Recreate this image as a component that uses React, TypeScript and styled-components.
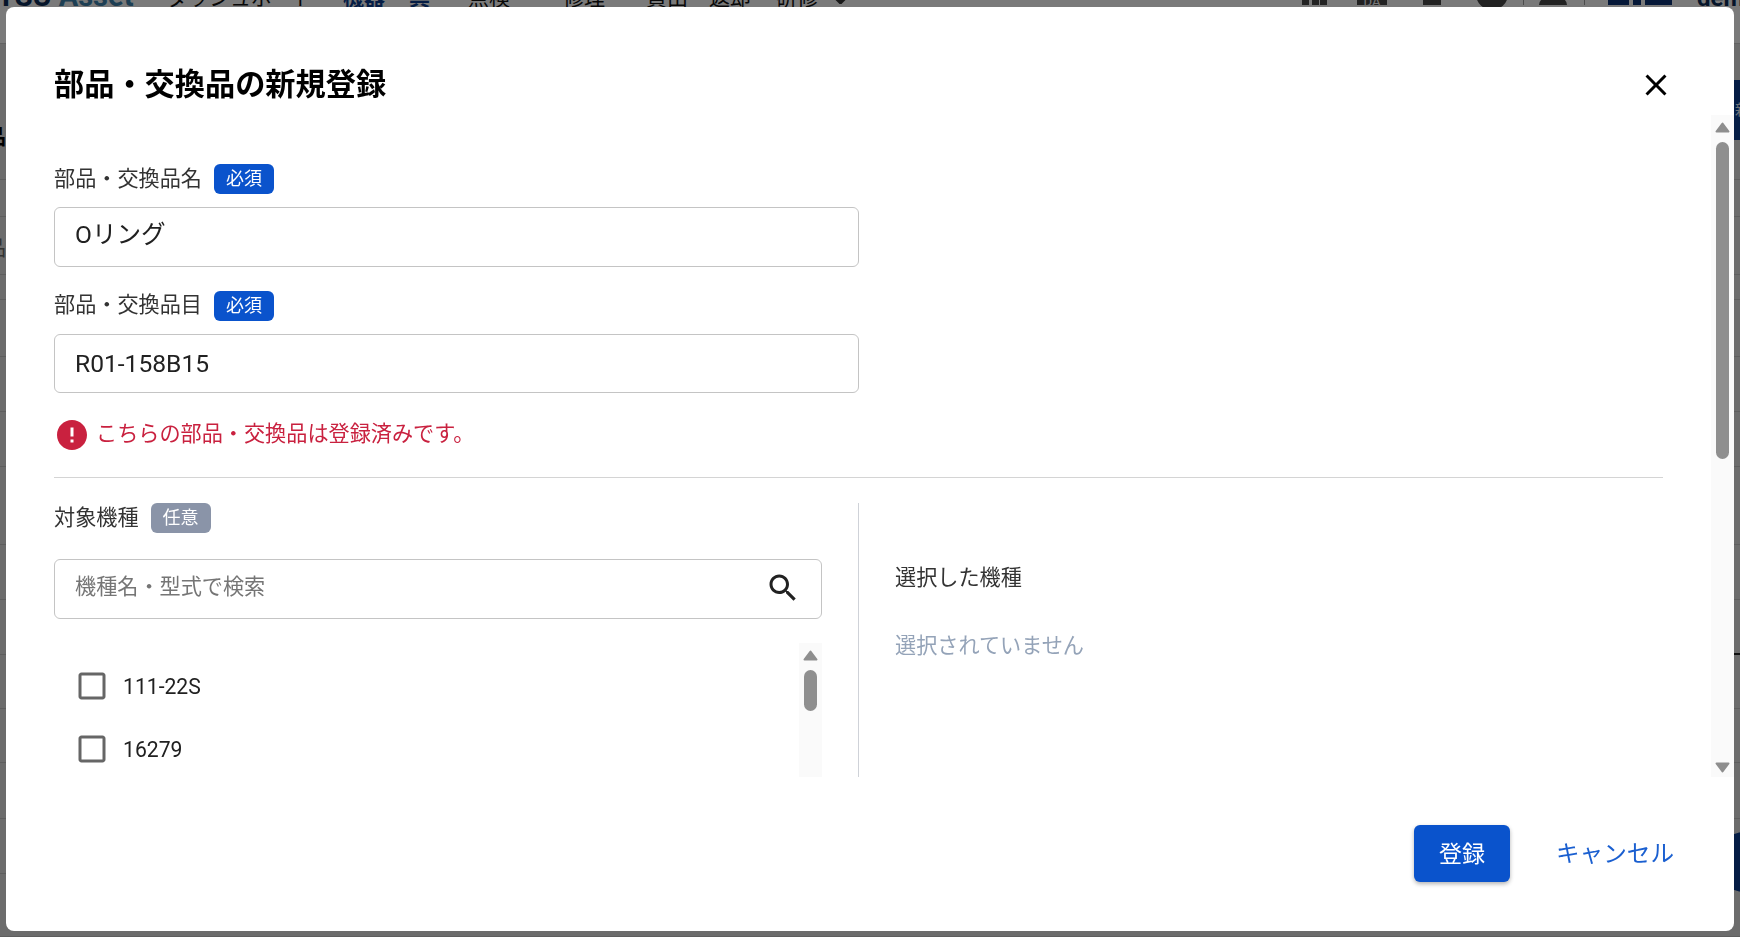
import React from 'react';
import styled, { createGlobalStyle } from 'styled-components';

const GlobalStyle = createGlobalStyle`
  html, body {
    margin: 0;
    height: 100%;
    overflow: hidden;
    background: #d8d8d8;
    font-family: Roboto, "Noto Sans CJK JP", sans-serif;
  }

  * {
    box-sizing: border-box;
  }
`;

/* page behind the dialog, only its edges stay visible */

const Page = styled.div`
  height: 100vh;
  display: flex;
  flex-direction: column;
  overflow: hidden;
`;

const TopBar = styled.header`
  height: 44px;
  flex-shrink: 0;
  background: #f4f4f4;
  border-bottom: 1px solid #c4c4c4;
`;

const TopRow = styled.div`
  height: 5px;
  display: flex;
  align-items: flex-end;
  white-space: nowrap;
  color: #111;
  font-size: 21px;
  line-height: 1;
`;

const Logo = styled.span`
  flex-shrink: 0;
  width: 170px;
  margin-left: -3px;
  font-size: 29px;
  font-weight: 700;
  color: #0a2a55;
  transform: translateY(6px);

  span {
    margin-left: 7px;
    color: #3b7ea8;
  }
`;

const NavItem = styled.span<{ $gap: number; $active?: boolean }>`
  flex-shrink: 0;
  margin-left: ${props => props.$gap}px;
  font-weight: ${props => (props.$active ? 700 : 400)};
  color: ${props => (props.$active ? '#0a3a8a' : '#111')};
  transform: translateY(4px);
`;

const NavChevron = styled.svg`
  flex-shrink: 0;
  width: 17px;
  height: 17px;
  margin-left: 14px;
  color: #333;
  transform: translateY(-1px);
`;

const RightGroup = styled.div`
  margin-left: auto;
  display: flex;
  align-items: flex-end;
  height: 7px;
  flex-shrink: 0;
  width: 438px;
  position: relative;
`;

const BarBlock = styled.span<{ $gap: number; $width: number; $color?: string }>`
  flex-shrink: 0;
  height: 7px;
  margin-left: ${props => props.$gap}px;
  width: ${props => props.$width}px;
  background: ${props => props.$color || '#444'};
`;

const HelpCircle = styled.span`
  flex-shrink: 0;
  width: 32px;
  height: 32px;
  margin: 0 -1px 0 35px;
  border-radius: 50%;
  background: #444;
  transform: translateY(5px);
`;

const UserShoulders = styled.span`
  flex-shrink: 0;
  width: 28px;
  height: 7px;
  margin-left: 15px;
  border-radius: 12px 12px 0 0;
  background: #444;
`;

const Tag = styled.span`
  flex-shrink: 0;
  margin-left: 30px;
  width: 30px;
  height: 7px;
  background: #444;
  color: #eee;
  font-size: 13px;
  line-height: 7px;
  text-align: center;
`;

const UserName = styled.span`
  flex-shrink: 0;
  margin-left: 25px;
  font-weight: 700;
  font-size: 24px;
  color: #0a2a55;
  transform: translateY(5px);
`;

const Heading = styled.div`
  height: 136px;
  flex-shrink: 0;
  display: flex;
  border-bottom: 1px solid #bdbdbd;
`;

const HeadingText = styled.h1`
  margin: 83px 0 0 -36px;
  font-size: 21px;
  line-height: 21px;
  font-weight: 700;
  color: #000;
`;

const ActionButton = styled.div`
  margin: 36px -94px 0 auto;
  width: 100px;
  height: 60px;
  padding-left: 1px;
  background: #0a3a8a;
  color: #dfe6f2;
  font-size: 15px;
  line-height: 60px;
`;

const TableRow = styled.div<{ $height: number }>`
  height: ${props => props.$height}px;
  flex-shrink: 0;
  display: flex;
  align-items: center;
  border-bottom: 1px solid #bdbdbd;
  color: #666;
  font-size: 21px;
`;

const RowText = styled.span`
  margin-left: -15px;
`;

const RowMark = styled.span`
  margin: 54px 0 0 auto;
  width: 6px;
  height: 2px;
  background: #222;
`;

const RoundAction = styled.div`
  position: absolute;
  top: 832px;
  left: 1715px;
  width: 80px;
  height: 60px;
  border-radius: 30px;
  background: #0a3a8a;
`;

/* dialog */

const Backdrop = styled.div`
  position: fixed;
  inset: 0;
  display: flex;
  padding: 7px 6px 6px;
  background: rgba(0, 0, 0, 0.5);
`;

const Dialog = styled.div`
  flex: 1;
  min-width: 0;
  display: flex;
  flex-direction: column;
  background: white;
  border-radius: 8px;
  overflow: hidden;
  color: #212121;
  font-size: 21.15px;
`;

const DialogHeader = styled.div`
  height: 108px;
  flex-shrink: 0;
  display: flex;
  align-items: flex-start;
  justify-content: space-between;
  padding: 56px 60px 0 48px;
`;

const Title = styled.h2`
  margin: 0;
  font-size: 30.2px;
  line-height: 44px;
  font-weight: 700;
  color: #000;
`;

const CloseButton = styled.button`
  width: 36px;
  height: 36px;
  margin-top: 4px;
  padding: 0;
  border: none;
  background: none;
  color: #000;
  display: flex;
`;

const ScrollArea = styled.div`
  height: 662px;
  flex-shrink: 0;
  display: flex;
`;

const ScrollContent = styled.div`
  flex: 1;
  min-width: 0;
  overflow: hidden;
  padding: 49px 48px 0 48px;
`;

const Track = styled.div`
  width: 23px;
  flex-shrink: 0;
  display: flex;
  flex-direction: column;
  align-items: center;
  padding: 7px 0 4px;
  background: #fafafa;
  color: #8e8e8e;
`;

const Arrow = styled.svg<{ $down?: boolean }>`
  width: 15px;
  height: 11px;
  flex-shrink: 0;
  transform: ${props => (props.$down ? 'rotate(180deg)' : 'none')};
`;

const Thumb = styled.div<{ $height: number }>`
  width: 13px;
  height: ${props => props.$height}px;
  margin: 9px 0 auto;
  border-radius: 7px;
  background: #8f8f8f;
`;

const LabelRow = styled.div`
  height: 30px;
  display: flex;
  align-items: center;
  gap: 12px;
  margin-bottom: 13px;
  color: #333;
  line-height: 30px;
`;

const LabelText = styled.span`
  margin-top: -1px;
`;

const Badge = styled.span<{ $optional?: boolean }>`
  width: 60px;
  height: 30px;
  border-radius: 6px;
  background: ${props => (props.$optional ? '#8a94a8' : '#0a53cc')};
  color: white;
  font-size: 18px;
  line-height: 29px;
  text-align: center;
`;

const TextInput = styled.input<{ $raised?: boolean }>`
  display: block;
  width: 805px;
  height: 59.5px;
  margin-bottom: 24px;
  padding: 0 20px ${props => (props.$raised ? '9px' : '0')};
  border: 1px solid #c4c4c4;
  border-radius: 6px;
  outline: none;
  background: white;
  color: #212121;
  font-family: inherit;
  font-size: 24.6px;
`;

const ErrorRow = styled.div`
  height: 36px;
  display: flex;
  align-items: center;
  gap: 6px;
  color: #c9213f;
  line-height: 36px;
`;

const ErrorText = styled.span`
  margin-top: -3px;
`;

const Divider = styled.hr`
  width: 1609px;
  margin: 24px 0 25px;
  border: none;
  border-top: 1px solid #d4d4d4;
`;

const Columns = styled.div`
  display: grid;
  grid-template-columns: 805px 1fr;
  height: 400px;
`;

const PickerColumn = styled.div`
  padding-right: 36px;
  border-right: 1px solid #cfd2d8;
`;

const SearchBox = styled.div`
  height: 59.5px;
  margin-top: 26px;
  display: flex;
  align-items: center;
  justify-content: space-between;
  padding: 0 20px 2px 20px;
  border: 1px solid #c4c4c4;
  border-radius: 6px;
  color: #212121;
`;

const SearchInput = styled.input`
  flex: 1;
  min-width: 0;
  border: none;
  outline: none;
  padding: 0 0 2px;
  background: none;
  color: #212121;
  font-family: inherit;
  font-size: 21.15px;

  &::placeholder {
    color: #757575;
    opacity: 1;
  }
`;

const ListArea = styled.div`
  display: flex;
  height: 300px;
  margin-top: 24px;
`;

const CheckList = styled.ul`
  flex: 1;
  margin: 0;
  padding: 12px 0 0 20px;
  list-style: none;
`;

const CheckRow = styled.li`
  height: 63px;
  display: flex;
  align-items: center;
  gap: 13px;
  color: #212121;
  svg {
    color: #666;
  }
`;

const SelectedColumn = styled.div`
  padding: 60px 0 0 36px;
`;

const SelectedTitle = styled.div`
  line-height: 30px;
  color: #333;
`;

const EmptyText = styled.div`
  margin-top: 38px;
  line-height: 30px;
  color: #94a3b8;
`;

const DialogFooter = styled.div`
  flex: 1;
  display: flex;
  align-items: flex-start;
  justify-content: flex-end;
  gap: 46px;
  padding: 48px 60px 0 0;
`;

const SubmitButton = styled.button`
  width: 96px;
  height: 57px;
  padding: 0 0 4px;
  border: none;
  border-radius: 6px;
  background: #0a53cc;
  color: white;
  font-family: inherit;
  font-size: 23px;
  box-shadow: 0 2px 4px rgba(0, 0, 0, 0.3);
`;

const CancelButton = styled.button`
  height: 57px;
  padding: 0 0 4px;
  border: none;
  background: none;
  color: #1a5fd0;
  font-family: inherit;
  font-size: 23.6px;
`;

const MuiIcon: React.FC<{ d: string }> = ({ d }) => (
  <svg width="36" height="36" viewBox="0 0 24 24" fill="currentColor" style={{ flexShrink: 0 }}>
    <path d={d} />
  </svg>
);

const CLOSE = 'M19 6.41 17.59 5 12 10.59 6.41 5 5 6.41 10.59 12 5 17.59 6.41 19 12 13.41 17.59 19 19 17.59 13.41 12z';
const SEARCH = 'M15.5 14h-.79l-.28-.27C15.41 12.59 16 11.11 16 9.5 16 5.91 13.09 3 9.5 3S3 5.91 3 9.5 5.91 16 9.5 16c1.61 0 3.09-.59 4.23-1.57l.27.28v.79l5 4.99L20.49 19l-4.99-5zm-6 0C7.01 14 5 11.99 5 9.5S7.01 5 9.5 5 14 7.01 14 9.5 11.99 14 9.5 14z';
const ERROR = 'M12 2C6.48 2 2 6.48 2 12s4.48 10 10 10 10-4.48 10-10S17.52 2 12 2zm1 15h-2v-2h2v2zm0-4h-2V7h2v6z';
const CHECKBOX = 'M19 5v14H5V5h14m0-2H5c-1.1 0-2 .9-2 2v14c0 1.1.9 2 2 2h14c1.1 0 2-.9 2-2V5c0-1.1-.9-2-2-2z';

const ScrollArrow: React.FC<{ down?: boolean }> = ({ down }) => (
  <Arrow $down={down} viewBox="0 0 15 11">
    <polygon
      points="7.5,1.5 13.5,9.5 1.5,9.5"
      fill="currentColor"
      stroke="currentColor"
      strokeWidth="2"
      strokeLinejoin="round"
    />
  </Arrow>
);

const Scrollbar: React.FC<{ thumb: number }> = ({ thumb }) => (
  <Track>
    <ScrollArrow />
    <Thumb $height={thumb} />
    <ScrollArrow down />
  </Track>
);

const rowHeights = [37, 58, 25, 57, 55, 55, 78, 55, 55, 54, 54, 56, 55, 63];
const models = ['111-22S', '16279'];

export default function App() {
  return (
    <>
      <GlobalStyle />
      <Page>
        <TopBar>
          <TopRow>
            <Logo>
              TSU<span>Asset</span>
            </Logo>
            <NavItem $gap={0}>ダッシュボード</NavItem>
            <NavItem $gap={29} $active>機器</NavItem>
            <NavItem $gap={24} $active>具</NavItem>
            <NavItem $gap={38}>点検</NavItem>
            <NavItem $gap={53}>修理</NavItem>
            <NavItem $gap={41}>貸出・返却</NavItem>
            <NavItem $gap={25}>研修</NavItem>
            <NavChevron viewBox="0 0 17 17" fill="none">
              <path d="M2 9l6.5 6.5L15 9" stroke="currentColor" strokeWidth="3.5" />
            </NavChevron>
            <RightGroup>
              <BarBlock $gap={0} $width={7} />
              <BarBlock $gap={3} $width={7} />
              <BarBlock $gap={1} $width={7} />
              <Tag>DA</Tag>
              <BarBlock $gap={36} $width={18} />
              <HelpCircle />
              <BarBlock $gap={16} $width={1} $color="#999" />
              <UserShoulders />
              <BarBlock $gap={17} $width={1} $color="#999" />
              <BarBlock $gap={23} $width={21} $color="#0a3070" />
              <BarBlock $gap={4} $width={8} $color="#0a3070" />
              <BarBlock $gap={4} $width={27} $color="#0a3070" />
              <UserName>dem</UserName>
            </RightGroup>
          </TopRow>
        </TopBar>
        <Heading>
          <HeadingText>部品</HeadingText>
          <ActionButton>新規</ActionButton>
        </Heading>
        {rowHeights.map((height, index) => (
          <TableRow key={index} $height={height}>
            {index === 1 && <RowText>品</RowText>}
            {index === 8 && <RowMark />}
          </TableRow>
        ))}
      </Page>
      <RoundAction />
      <Backdrop>
        <Dialog>
          <DialogHeader>
            <Title>部品・交換品の新規登録</Title>
            <CloseButton aria-label="close">
              <MuiIcon d={CLOSE} />
            </CloseButton>
          </DialogHeader>

          <ScrollArea>
            <ScrollContent>
              <LabelRow>
                <LabelText>部品・交換品名</LabelText>
                <Badge>必須</Badge>
              </LabelRow>
              <TextInput $raised defaultValue="Oリング" />

              <LabelRow>
                <LabelText>部品・交換品目</LabelText>
                <Badge>必須</Badge>
              </LabelRow>
              <TextInput defaultValue="R01-158B15" />

              <ErrorRow>
                <MuiIcon d={ERROR} />
                <ErrorText>こちらの部品・交換品は登録済みです。</ErrorText>
              </ErrorRow>

              <Divider />

              <Columns>
                <PickerColumn>
                  <LabelRow>
                    <LabelText>対象機種</LabelText>
                    <Badge $optional>任意</Badge>
                  </LabelRow>
                  <SearchBox>
                    <SearchInput placeholder="機種名・型式で検索" />
                    <MuiIcon d={SEARCH} />
                  </SearchBox>
                  <ListArea>
                    <CheckList>
                      {models.map(model => (
                        <CheckRow key={model}>
                          <MuiIcon d={CHECKBOX} />
                          {model}
                        </CheckRow>
                      ))}
                    </CheckList>
                    <Scrollbar thumb={41} />
                  </ListArea>
                </PickerColumn>
                <SelectedColumn>
                  <SelectedTitle>選択した機種</SelectedTitle>
                  <EmptyText>選択されていません</EmptyText>
                </SelectedColumn>
              </Columns>
            </ScrollContent>
            <Scrollbar thumb={317} />
          </ScrollArea>

          <DialogFooter>
            <SubmitButton>登録</SubmitButton>
            <CancelButton>キャンセル</CancelButton>
          </DialogFooter>
        </Dialog>
      </Backdrop>
    </>
  );
}
